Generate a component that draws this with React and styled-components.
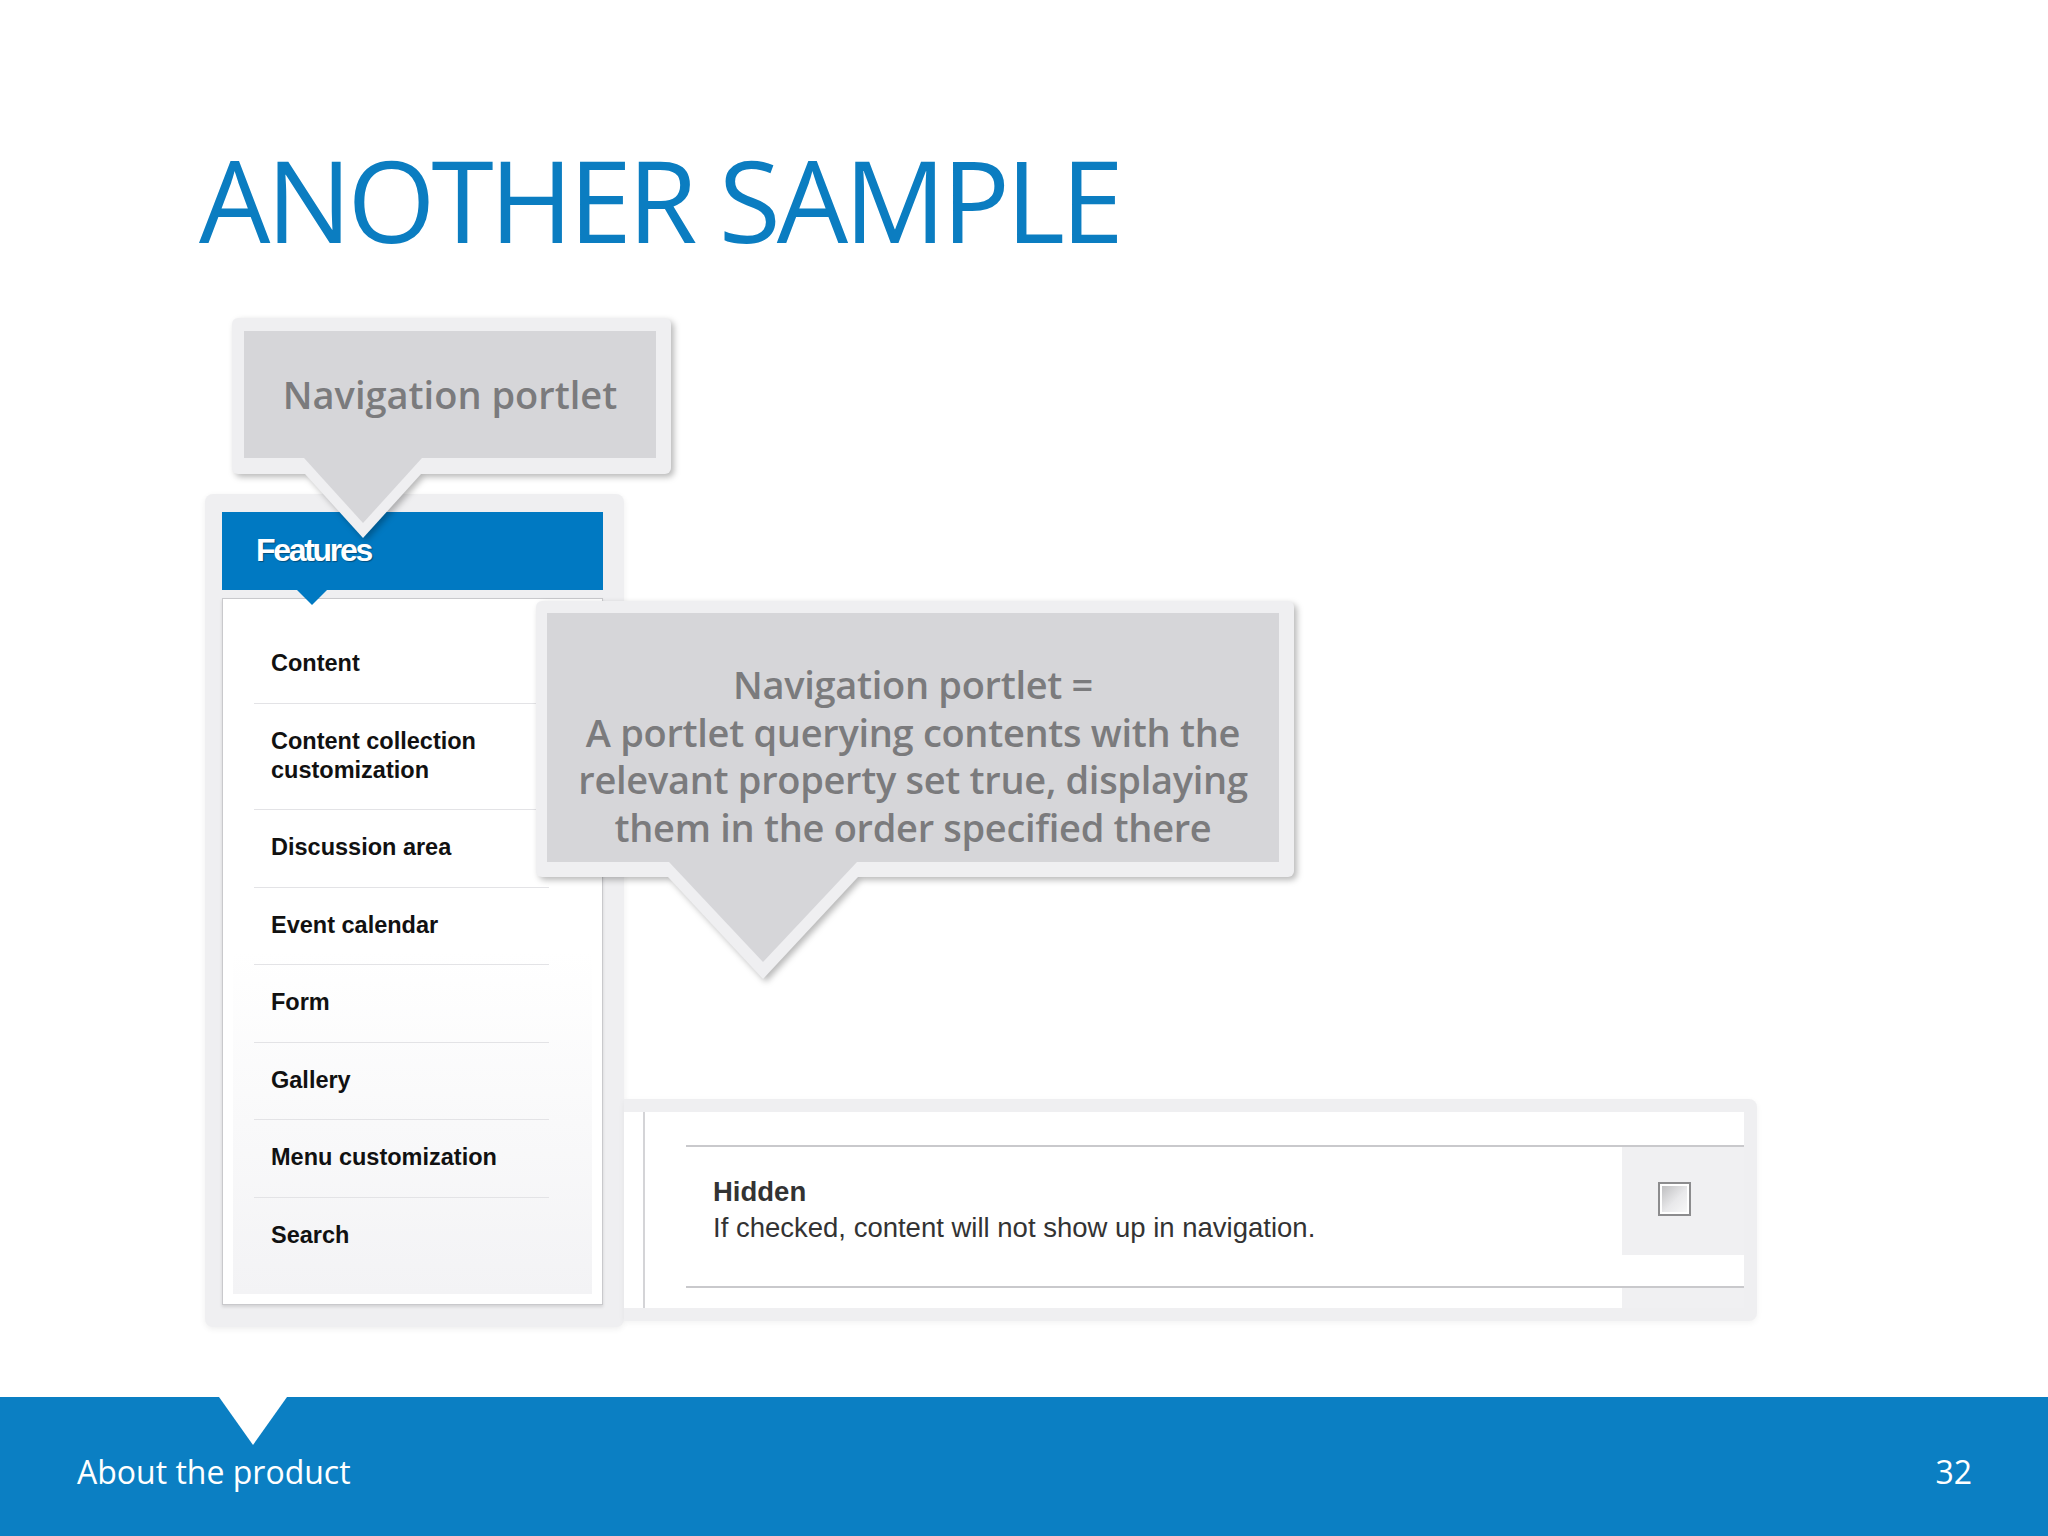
import styled, { createGlobalStyle } from "styled-components";

const GlobalStyle = createGlobalStyle`
  html, body {
    margin: 0;
    padding: 0;
    background: #fff;
  }
  * { box-sizing: border-box; }
`;

const features = [
  ["Content"],
  ["Content collection", "customization"],
  ["Discussion area"],
  ["Event calendar"],
  ["Form"],
  ["Gallery"],
  ["Menu customization"],
  ["Search"],
];

const calloutLines = [
  "Navigation portlet =",
  "A portlet querying contents with the",
  "relevant property set true, displaying",
  "them in the order specified there",
];

const App = () => {
  return (
    <>
      <GlobalStyle />
      <Slide>
        <Title>ANOTHER SAMPLE</Title>

        <Stage>
          <NavFrame>
            <NavHeader>Features</NavHeader>
            <ListBox>
              <ListInner>
                {features.map((lines, i) => (
                  <Item key={i} $first={i === 0}>
                    {lines.map((l, j) => (
                      <div key={j}>{l}</div>
                    ))}
                  </Item>
                ))}
              </ListInner>
            </ListBox>
          </NavFrame>

          <HiddenFrame>
            <HiddenInner>
              <Fieldset>
                <FieldRow>
                  <LabelCell>
                    <FieldName>Hidden</FieldName>
                    <FieldHelp>If checked, content will not show up in navigation.</FieldHelp>
                  </LabelCell>
                  <ControlCell>
                    <Checkbox />
                  </ControlCell>
                </FieldRow>
                <FieldTail>
                  <span />
                  <TailControl />
                </FieldTail>
              </Fieldset>
            </HiddenInner>
          </HiddenFrame>

          <Bubble
            $x={27}
            $y={-176}
            $pad="13px 15px 16px 12px"
            $pl={73}
            $ph={64}
            $pw={58}
          >
            <BubbleInner $w={412} $h={127} $pl={60} $ph={65} $pw={59}>
              <BubbleTitle>Navigation portlet</BubbleTitle>
            </BubbleInner>
          </Bubble>

          <Bubble
            $x={331}
            $y={107}
            $pad="12px 15px 15px 11px"
            $pl={132}
            $ph={102}
            $pw={95}
          >
            <BubbleInner $w={732} $h={249} $pl={122} $ph={100} $pw={94}>
              <BubbleText>
                {calloutLines.map((l) => (
                  <BubbleLine key={l}>{l}</BubbleLine>
                ))}
              </BubbleText>
            </BubbleInner>
          </Bubble>
        </Stage>

        <Footer>
          <FooterText>About the product</FooterText>
          <FooterText>32</FooterText>
        </Footer>
      </Slide>
    </>
  );
};

const Slide = styled.div`
  width: 2048px;
  height: 1536px;
  overflow: hidden;
  display: flex;
  flex-direction: column;
  background: #fff;
`;

const Title = styled.h1`
  margin: 143px 0 0 199px;
  font-family: "Open Sans", "Noto Sans", sans-serif;
  font-weight: 400;
  font-size: 113px;
  line-height: 113px;
  letter-spacing: -4px;
  color: #0b7dc1;
`;

const Stage = styled.div`
  position: relative;
  display: flex;
  align-items: flex-end;
  margin: 238px 0 0 205px;
`;

const NavFrame = styled.div`
  width: 419px;
  padding: 18px 21px 22px 17px;
  background: #efeff1;
  border-radius: 8px;
  box-shadow: 0 2px 6px rgba(0, 0, 0, 0.07);
`;

const NavHeader = styled.div`
  position: relative;
  z-index: 1;
  height: 78px;
  padding-left: 34px;
  background: #0079c2;
  color: #fff;
  font-family: "Liberation Sans", Arial, sans-serif;
  font-weight: 700;
  font-size: 32px;
  line-height: 76px;
  letter-spacing: -2.3px;
  text-shadow: 1px 1px 1px rgba(0, 0, 0, 0.35);

  &::after {
    content: "";
    position: absolute;
    top: 100%;
    left: 75px;
    border-left: 15px solid transparent;
    border-right: 15px solid transparent;
    border-top: 15px solid #0079c2;
  }
`;

const ListBox = styled.div`
  margin-top: 8px;
  padding: 10px;
  background: #fff;
  border: 1px solid #c9c9cc;
  box-shadow: 0 2px 3px rgba(0, 0, 0, 0.12);
`;

const ListInner = styled.div`
  padding: 17px 0 20px;
  background: linear-gradient(to bottom, #fff 50%, #f3f3f5 100%);
`;

const Item = styled.div`
  margin: 0 43px 0 21px;
  padding: 23px 0 24.5px 17px;
  border-top: ${(p) => (p.$first ? "none" : "1px solid #e3e3e6")};
  font-family: "Liberation Sans", Arial, sans-serif;
  font-weight: 700;
  font-size: 23.5px;
  line-height: 29px;
  color: #111;
`;

const HiddenFrame = styled.div`
  width: 1133px;
  height: 222px;
  margin-bottom: 6px;
  padding: 13px 13px 13px 0;
  background: #efeff1;
  border-radius: 0 8px 8px 0;
  box-shadow: 0 2px 6px rgba(0, 0, 0, 0.05);
`;

const HiddenInner = styled.div`
  display: flex;
  height: 100%;
  padding-left: 19px;
  background: #fff;
`;

const Fieldset = styled.div`
  flex: 1;
  display: flex;
  flex-direction: column;
  padding: 33px 0 0 41px;
  border-left: 2px solid #d4d4d7;
`;

const FieldRow = styled.div`
  display: grid;
  grid-template-columns: 1fr 122px;
  border-top: 2px solid #c9c9cc;
  border-bottom: 2px solid #c9c9cc;
`;

const LabelCell = styled.div`
  padding: 27px 0 40px 27px;
  font-family: "Liberation Sans", Arial, sans-serif;
  font-size: 27.5px;
  line-height: 36px;
  color: #333;
`;

const FieldName = styled.div`
  font-weight: 700;
`;

const FieldHelp = styled.div`
  font-weight: 400;
`;

const ControlCell = styled.div`
  padding: 35px 0 0 36px;
  background: linear-gradient(to bottom, #f0f0f2 0, #f0f0f2 108px, #fff 108px);
`;

const Checkbox = styled.div`
  width: 33px;
  height: 34px;
  border: 2px solid #8c8c8e;
  box-shadow: inset 0 0 0 2px #fff;
  background: linear-gradient(135deg, #b9b9bb 0%, #e9e9eb 55%, #fafafa 100%);
`;

const FieldTail = styled.div`
  flex: 1;
  display: grid;
  grid-template-columns: 1fr 122px;
`;

const TailControl = styled.div`
  background: #f0f0f2;
`;

const Bubble = styled.div`
  position: absolute;
  z-index: 2;
  left: ${(p) => p.$x}px;
  top: ${(p) => p.$y}px;
  padding: ${(p) => p.$pad};
  background: #efeff1;
  border-radius: 6px;
  filter: drop-shadow(3px 3px 3px rgba(0, 0, 0, 0.28));

  &::before {
    content: "";
    position: absolute;
    top: 100%;
    left: ${(p) => p.$pl}px;
    border-left: ${(p) => p.$pw}px solid transparent;
    border-right: ${(p) => p.$pw}px solid transparent;
    border-top: ${(p) => p.$ph}px solid #efeff1;
  }
`;

const BubbleInner = styled.div`
  position: relative;
  width: ${(p) => p.$w}px;
  height: ${(p) => p.$h}px;
  background: #d6d6d9;

  &::after {
    content: "";
    position: absolute;
    top: 100%;
    left: ${(p) => p.$pl}px;
    border-left: ${(p) => p.$pw}px solid transparent;
    border-right: ${(p) => p.$pw}px solid transparent;
    border-top: ${(p) => p.$ph}px solid #d6d6d9;
  }
`;

const BubbleTitle = styled.div`
  font-family: "Open Sans", "Noto Sans", sans-serif;
  font-weight: 600;
  font-size: 38px;
  line-height: 127px;
  text-align: center;
  color: #7b7b7d;
`;

const BubbleText = styled.div`
  padding-top: 48px;
  font-family: "Open Sans", "Noto Sans", sans-serif;
  font-weight: 600;
  font-size: 38px;
  letter-spacing: -0.3px;
  text-align: center;
  color: #7b7b7d;
`;

const BubbleLine = styled.div`
  height: 47.5px;
  line-height: 47.5px;
`;

const Footer = styled.div`
  position: relative;
  margin-top: auto;
  height: 139px;
  display: flex;
  justify-content: space-between;
  padding: 53px 76px 0 77px;
  background: #0b7fc3;

  &::before {
    content: "";
    position: absolute;
    top: 0;
    left: 219px;
    border-left: 34px solid transparent;
    border-right: 34px solid transparent;
    border-top: 48px solid #fff;
  }
`;

const FooterText = styled.div`
  font-family: "Open Sans", "Noto Sans", sans-serif;
  font-weight: 400;
  font-size: 32px;
  line-height: 44px;
  color: #fff;
`;

export default App;
